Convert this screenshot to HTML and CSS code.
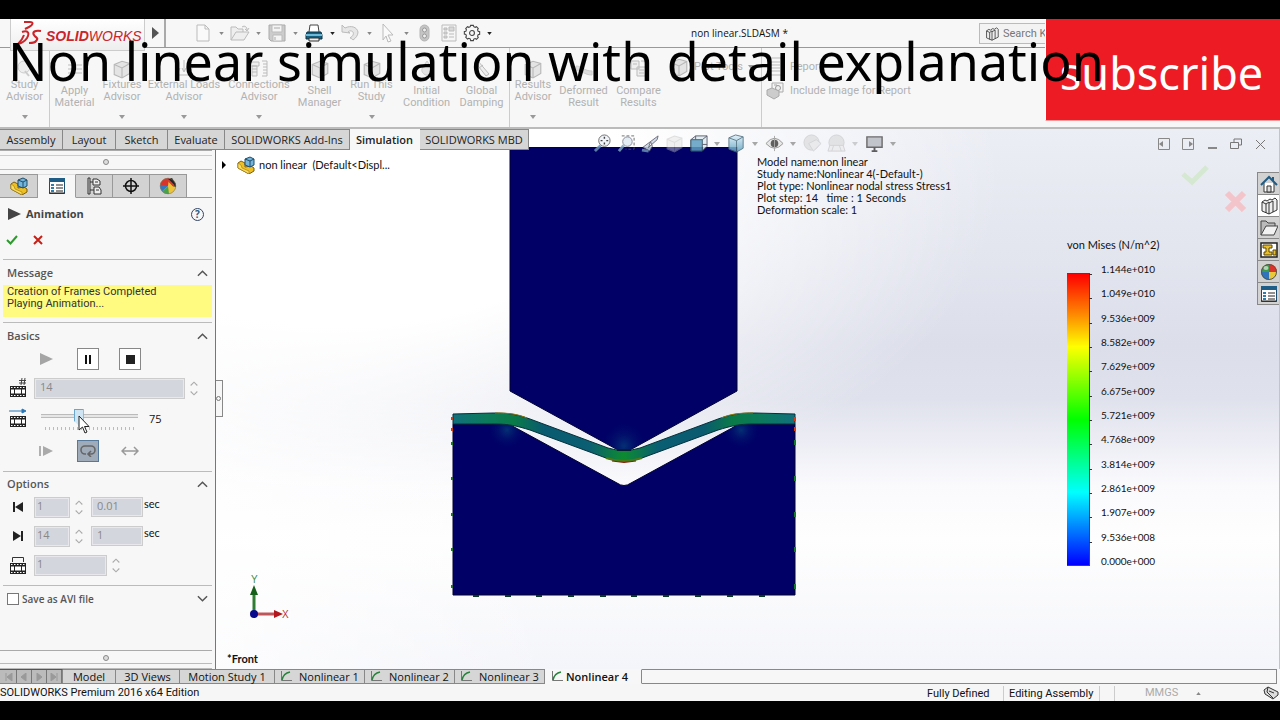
FILE: index.html
```html
<!DOCTYPE html>
<html lang="en">
<head>
<meta charset="utf-8">
<title>non linear.SLDASM</title>
<link rel="stylesheet" href="styles.css">
</head>
<body>
<svg class="defs" aria-hidden="true">
  <defs>
    <linearGradient id="steel" x1="0" y1="0" x2="0" y2="1"><stop offset="0" stop-color="#dff0f8"/><stop offset="1" stop-color="#5a9fc0"/></linearGradient>
    <symbol id="caret" viewBox="0 0 6 4"><path d="M0 0h6L3 4z" fill="currentColor"/></symbol>
    <symbol id="up" viewBox="0 0 12 8"><path d="M1 7l5-5 5 5" fill="none" stroke="currentColor" stroke-width="1.6"/></symbol>
    <symbol id="down" viewBox="0 0 12 8"><path d="M1 1l5 5 5-5" fill="none" stroke="currentColor" stroke-width="1.6"/></symbol>
    <symbol id="assembly" viewBox="0 0 18 18"><path d="M1 7l3-2 4 2v4l6-1 3 2v3l-5 3L1 12z" fill="#eebf23" stroke="#7b5a10"/><path d="M1 7l3 2 1 3 7 3v3L1 12z" fill="#f9dd5d" stroke="#9c7718" stroke-width=".6"/><path d="M8 3l5-2 4 2v6l-4 2-5-2z" fill="#74b5dc" stroke="#1f4c68"/><path d="M8 3l5 2 4-2M13 5v6" fill="none" stroke="#1f4c68"/></symbol>
    <symbol id="props" viewBox="0 0 18 18"><path d="M1.500 1.500h15v15h-15z" fill="#fff" stroke="#1b4e72"/><path d="M1 1h16v4H1z" fill="#1f5d86"/><path d="M3 7h3v2H3zM3 10h3v2H3zM3 13h3v2H3z" fill="#2e7eb2"/><path d="M8 8h7M8 11h7M8 14h7" stroke="#222"/><path d="M1 16h16" stroke="#222"/></symbol>
    <symbol id="config" viewBox="0 0 18 18"><path d="M3 1v16M5 1v16M3 1h2M3 17h2M5 5h4M5 13h4" fill="none" stroke="#333"/><path d="M8 2h4l3 2v4H8zM9 10h5l2 3v4H9z" fill="#eee" stroke="#333"/><path d="M10 5h3M11 13h3" stroke="#333"/></symbol>
    <symbol id="target" viewBox="0 0 18 18"><circle cx="9" cy="9" r="5.500" fill="none" stroke="#111" stroke-width="1.500"/><path d="M9 1v16M1 9h16" stroke="#111" stroke-width="1.500"/></symbol>
    <symbol id="ball" viewBox="0 0 18 18"><circle cx="9" cy="9" r="8" fill="#e9c93b"/><path d="M9 9L1 9a8 8 0 0 1 8-8z" fill="#3d9b4b"/><path d="M9 9L9 1a8 8 0 0 1 8 8z" fill="#d9342b"/><path d="M9 9H1a8 8 0 0 0 8 8z" fill="#2f74bd"/><circle cx="9" cy="9" r="7.500" fill="none" stroke="#555"/><ellipse cx="6" cy="5" rx="2.500" ry="2" fill="#fff" opacity=".6"/></symbol>
    <symbol id="ball2" viewBox="0 0 18 18"><circle cx="9" cy="9" r="8" fill="#eec33c"/><path d="M9 9L1 9a8 8 0 0 1 9-8z" fill="#d9342b"/><path d="M9 9L3 14.500A8 8 0 0 1 1 8z" fill="#3478c0"/><path d="M9 9l-6 5.500A8 8 0 0 0 10 17z" fill="#48a24c"/><path d="M9 2l4-1 4 6v3l-3-1z" fill="#222"/><path d="M9 3l6 6" stroke="#d43c30" stroke-width="2"/><circle cx="9" cy="9" r="7.800" fill="none" stroke="#777" stroke-width=".6"/></symbol>
    <symbol id="film" viewBox="0 0 18 18"><path d="M1 6h16v11H1z" fill="#222"/><path d="M2 9.500h3v4H2zM6 9.500h6v4H6zM13 9.500h3v4h-3z" fill="#fff"/><path d="M2 7.500h15M2 15.500h15" stroke="#fff" stroke-dasharray="1.500 1.500"/></symbol>
    <symbol id="box" viewBox="0 0 18 18"><path d="M2 5l7-3 7 2v9l-7 4-7-3z" fill="#e4e4e4" stroke="#b8b8b8"/><path d="M2 5l7 3 7-4M9 8v9" fill="none" stroke="#b8b8b8"/></symbol>
    <symbol id="plot" viewBox="0 0 12 11"><path d="M1.500 0v9.500H12" fill="none" stroke="#777"/><path d="M2 9C3 4 5 2 10 1" fill="none" stroke="#27833b" stroke-width="1.300"/></symbol>
    <symbol id="books" viewBox="0 0 18 18"><path d="M2 5l3-2 2 1 3-2 2 1 3-2 2 2v10l-8 4-7-3z" fill="#eee" stroke="#333"/><path d="M2 5l4 2v9M6 7l3-2M9 5v12M9 6l4-2M13 4v11" fill="none" stroke="#333"/></symbol>
  </defs>
</svg>

<div class="app">
  <header class="titlebar">
    <div class="brand">
      <div class="logo">
        <svg width="26" height="26" viewBox="0 0 26 26"><path d="M8 2h6c4 0 3 3-1 5l-4 2" fill="none" stroke="#c9252b" stroke-width="2"/><path d="M6 12c6-2 8 1 5 6-2 3-5 5-9 6 3-3 5-6 6-9" fill="none" stroke="#c9252b" stroke-width="2"/><path d="M25 11c-6-1-9 1-7 4 2 3 5 3 2 6-1 2-4 2-7 2" fill="none" stroke="#c9252b" stroke-width="2.200"/></svg>
        <span class="wordmark"><b>SOLID</b>WORKS</span>
      </div>
      <button class="plain" aria-label="Menu"><svg width="7" height="12" viewBox="0 0 7 12"><path d="M0 0l7 6-7 6z" fill="#555"/></svg></button>
    </div>
    <nav class="quick">
      <button class="qb dim" aria-label="New"><svg width="20" height="20" viewBox="0 0 20 20"><path d="M4 2h8l4 4v12H4zM12 2v4h4" fill="#fafafa" stroke="#bbb"/></svg><svg class="car"><use href="#caret"/></svg></button>
      <button class="qb dim" aria-label="Open"><svg width="20" height="20" viewBox="0 0 20 20"><path d="M1 17V4h5l2 2h5v3M1 17l5-8h13l-5 8zM12 4c3-2 5 0 5 3M15 6l2 2 2-3" fill="#eee" stroke="#bbb"/></svg><svg class="car"><use href="#caret"/></svg></button>
      <button class="qb dim" aria-label="Save"><svg width="20" height="20" viewBox="0 0 20 20"><path d="M2 2h16v16H4l-2-2z" fill="#ccc" stroke="#aaa"/><path d="M5 2h10v7H5zM6 12h9v6H6z" fill="#f4f4f4" stroke="#bbb"/><path d="M7 5h6M8 14v3" stroke="#aaa"/></svg><svg class="car"><use href="#caret"/></svg></button>
      <button class="qb" aria-label="Print"><svg width="20" height="20" viewBox="0 0 20 20"><path d="M5 9l1-7h8l1 7" fill="#fff" stroke="#444"/><path d="M3 9h14l1 3v4H2v-4z" fill="#17607f" stroke="#0d3447"/><path d="M2 12h16" stroke="#6fb9d7" stroke-width="2"/><path d="M5 15h10v3H5z" fill="#eee" stroke="#333"/></svg><svg class="car"><use href="#caret"/></svg></button>
      <button class="qb dim" aria-label="Undo"><svg width="20" height="20" viewBox="0 0 20 20"><path d="M1 9V2l3 3c6-3 12-1 13 4 0 3-2 6-5 8-1-1-2-2-3-2 3-2 4-4 3-6-1-1-3-2-5 0l2 1z" fill="#e6e6e6" stroke="#bbb"/></svg><svg class="car"><use href="#caret"/></svg></button>
      <button class="qb dim" aria-label="Select"><svg width="20" height="20" viewBox="0 0 20 20"><path d="M5 1l10 11h-5l3 6-3 1-2-6-3 4z" fill="#fafafa" stroke="#bbb"/></svg><svg class="car"><use href="#caret"/></svg></button>
      <button class="qb one" aria-label="Rebuild"><svg width="20" height="20" viewBox="0 0 20 20"><rect x="5" y="2" width="9" height="16" rx="4.500" fill="#c4c4c4" stroke="#b4b4b4"/><circle cx="9.500" cy="7" r="2" fill="#eee" stroke="#999"/><circle cx="9.500" cy="13" r="2" fill="#eee" stroke="#999"/></svg></button>
      <button class="qb one" aria-label="File properties"><svg width="20" height="20" viewBox="0 0 20 20"><path d="M3 2h14v16H3z" fill="#f6f6f6" stroke="#bbb"/><path d="M5 5h3v2H5zM5 9h3v2H5zM5 13h3v2H5zM10 4h5v4h-5z" fill="#d8d8d8" stroke="#bbb"/><path d="M10 11h5M10 14h5" stroke="#bbb"/></svg></button>
      <button class="qb" aria-label="Options"><svg width="18" height="18" viewBox="0 0 20 20"><path d="M8 3l.5-1.500h3L12 3l1.500.7L15 3l2 2-.8 1.500.6 1.500 1.700.5v3l-1.700.5-.6 1.500.8 1.500-2 2-1.500-.8-1.500.6-.5 1.700h-3L8 16.500l-1.500-.6L5 16.700l-2-2 .8-1.500-.6-1.500-1.700-.5v-3L3.200 8l.6-1.500L3 5l2-2 1.500.7z" fill="none" stroke="#444" stroke-width="1.200"/><circle cx="10" cy="10" r="2.700" fill="none" stroke="#444" stroke-width="1.200"/></svg><svg class="car"><use href="#caret"/></svg></button>
    </nav>
    <h1 class="doc">non linear.SLDASM *</h1>
    <label class="search"><svg width="14" height="14"><use href="#books"/></svg><input type="text" aria-label="Search" placeholder="Search Knowledge Base"></label>
  </header>

  <div class="ribbon">
    <button class="rb w50"><svg width="20" height="20" viewBox="0 0 20 20"><circle cx="9" cy="8" r="6" fill="#eee" stroke="#ccc"/><path d="M10 12l4 5" stroke="#ccc" stroke-width="2"/></svg><span>Study<br>Advisor</span><svg class="car"><use href="#caret"/></svg></button>
    <span class="sep"></span>
    <button class="rb low w50"><svg width="20" height="20" viewBox="0 0 20 20"><path d="M3 6h14M3 10h14M3 14h14" stroke="#bbb"/></svg><span>Apply<br>Material</span></button>
    <button class="rb w46"><svg width="20" height="20"><use href="#box"/></svg><span>Fixtures<br>Advisor</span><svg class="car"><use href="#caret"/></svg></button>
    <button class="rb w78"><svg width="20" height="20" viewBox="0 0 20 20"><path d="M4 3v9M10 1v11M16 3v9M2 9l2 4 2-4M8 9l2 4 2-4M14 9l2 4 2-4M2 16h16" fill="none" stroke="#bbb"/></svg><span>External Loads<br>Advisor</span><svg class="car"><use href="#caret"/></svg></button>
    <button class="rb w72"><svg width="20" height="20" viewBox="0 0 20 20"><path d="M1 3h9v4H1zM3 7h5v10H3zM3 10h5M3 13h5M13 2h5M13 17h5M18 2v15M14 5h4M14 8h4M14 11h4M14 14h4" fill="#eee" stroke="#bbb"/></svg><span>Connections<br>Advisor</span><svg class="car"><use href="#caret"/></svg></button>
    <button class="rb low w50"><svg width="20" height="20"><use href="#box"/></svg><span>Shell<br>Manager</span></button>
    <button class="rb w54"><svg width="20" height="20"><use href="#box"/></svg><span>Run This<br>Study</span><svg class="car"><use href="#caret"/></svg></button>
    <button class="rb low w54"><svg width="20" height="20" viewBox="0 0 20 20"><path d="M10 2l4 6a5 5 0 1 1-8 0z" fill="#e4e4e4" stroke="#ccc"/></svg><span>Initial<br>Condition</span></button>
    <button class="rb low w54"><svg width="20" height="20" viewBox="0 0 20 20"><path d="M3 3l3-1 11 13-3 2zM7 9l4-3" fill="#eee" stroke="#bbb"/></svg><span>Global<br>Damping</span></button>
    <span class="sep"></span>
    <button class="rb w46"><svg width="20" height="20"><use href="#box"/></svg><span>Results<br>Advisor</span><svg class="car"><use href="#caret"/></svg></button>
    <button class="rb low w54"><svg width="20" height="20" viewBox="0 0 20 20"><path d="M2 7c6 0 8 5 16 5v4C10 16 8 11 2 11z" fill="#ddd" stroke="#ccc"/></svg><span>Deformed<br>Result</span></button>
    <button class="rb low w54"><svg width="20" height="20" viewBox="0 0 20 20"><path d="M2 2h8v8H2zM8 8h9v9H8zM12 2h5v5M4 5h4M10 11h5M10 14h5" fill="#eee" stroke="#bbb"/></svg><span>Compare<br>Results</span></button>
    <div class="stack plots"><button class="row"><svg width="20" height="20"><use href="#box"/></svg>Plot Tools<svg class="car"><use href="#caret"/></svg></button></div>
    <span class="sep"></span>
    <div class="stack">
      <button class="row"><svg width="20" height="20" viewBox="0 0 20 20"><path d="M4 1h13v17H4zM6 5h9M6 8h9M6 11h9M6 14h9" fill="#f8f8f8" stroke="#bbb"/></svg>Report</button>
      <button class="row"><svg width="20" height="20" viewBox="0 0 20 20"><path d="M7 2h11v9H7zM9 4h3v2" fill="#f4f4f4" stroke="#aaa"/><circle cx="13" cy="7" r="2.500" fill="#eee" stroke="#999"/><path d="M2 9l5-2 7 3v5l-5 3-7-4z" fill="#ccc" stroke="#aaa"/></svg>Include Image for Report</button>
    </div>
  </div>

  <main class="work">
    <nav class="tabs">
      <button class="t1">Assembly</button><button class="t2">Layout</button><button class="t3">Sketch</button><button class="t4">Evaluate</button><button class="t5">SOLIDWORKS Add-Ins</button><button class="t6 on">Simulation</button><button class="t7">SOLIDWORKS MBD</button>
    </nav>

    <aside class="panel">
      <div class="grip"><i></i></div>
      <nav class="ptabs">
        <button aria-label="Feature tree"><svg width="18" height="18"><use href="#assembly"/></svg></button>
        <button class="on" aria-label="Properties"><svg width="18" height="18"><use href="#props"/></svg></button>
        <button aria-label="Configurations"><svg width="18" height="18"><use href="#config"/></svg></button>
        <button aria-label="Dimensions"><svg width="18" height="18"><use href="#target"/></svg></button>
        <button aria-label="Display"><svg width="18" height="18"><use href="#ball2"/></svg></button>
      </nav>
      <div class="head">
        <svg width="13" height="12" viewBox="0 0 13 12"><path d="M0 0l13 6-13 6z" fill="#444"/></svg>
        <h2>Animation</h2>
        <button class="help" aria-label="Help">?</button>
      </div>
      <div class="confirm">
        <button class="plain" aria-label="OK"><svg width="12" height="10" viewBox="0 0 12 10"><path d="M1 5l3.500 3.500L11 1" fill="none" stroke="#2c9a2c" stroke-width="2"/></svg></button>
        <button class="plain" aria-label="Cancel"><svg width="10" height="10" viewBox="0 0 10 10"><path d="M1 1l8 8M9 1L1 9" stroke="#c81e14" stroke-width="2"/></svg></button>
      </div>

      <section>
        <div class="sh"><h3>Message</h3><button class="plain" aria-label="Collapse"><svg class="chev"><use href="#up"/></svg></button></div>
        <p class="note">Creation of Frames Completed<br>Playing Animation...</p>
      </section>

      <section>
        <div class="sh"><h3>Basics</h3><button class="plain" aria-label="Collapse"><svg class="chev"><use href="#up"/></svg></button></div>
        <div class="play">
          <button class="pb flat" aria-label="Play"><svg width="13" height="12" viewBox="0 0 13 12"><path d="M0 0l13 6-13 6z" fill="#a5a5a5"/></svg></button>
          <button class="pb" aria-label="Pause"><svg width="8" height="9" viewBox="0 0 8 9"><path d="M1 0h2v9H1zM5 0h2v9H5z" fill="#111"/></svg></button>
          <button class="pb" aria-label="Stop"><svg width="9" height="9" viewBox="0 0 9 9"><path d="M0 0h9v9H0z" fill="#222"/></svg></button>
        </div>
        <div class="field frames">
          <svg width="18" height="20" viewBox="0 0 18 20"><use href="#film" y="2" width="18" height="18"/><path d="M13 0l-1 7M16 0l-1 7M10 2.500h7M10 5h7" stroke="#333" stroke-width=".9"/></svg>
          <input class="grow" type="text" value="14" aria-label="Number of frames" disabled>
          <span class="spin"><svg><use href="#up"/></svg><svg><use href="#down"/></svg></span>
        </div>
        <div class="field speed">
          <svg width="18" height="20" viewBox="0 0 18 20"><use href="#film" y="2" width="18" height="18"/><path d="M0 3h15M13 1l4 2-4 2z" stroke="#2676b6" fill="#2676b6"/></svg>
          <span class="slide"><input type="range" id="speed" min="0" max="200" value="75" aria-label="Speed"><i class="ticks"></i></span>
          <output for="speed">75</output>
        </div>
        <div class="play modes">
          <button class="pb flat" aria-label="Play once"><svg width="14" height="10" viewBox="0 0 14 10"><path d="M1 0v10" stroke="#999" stroke-width="1.500"/><path d="M4 0l10 5-10 5z" fill="#aaa"/></svg></button>
          <button class="pb sel" aria-label="Loop"><svg width="16" height="12" viewBox="0 0 16 12"><path d="M6 9H5a4 4 0 0 1 0-8h6a4 4 0 0 1 0 8H9M11 6L8 9l3 3" fill="none" stroke="#666" stroke-width="1.600"/></svg></button>
          <button class="pb flat" aria-label="Reciprocate"><svg width="18" height="10" viewBox="0 0 18 10"><path d="M1 5h16M5 1L1 5l4 4M13 1l4 4-4 4" fill="none" stroke="#999" stroke-width="1.500"/></svg></button>
        </div>
      </section>

      <section class="opts">
        <div class="sh"><h3>Options</h3><button class="plain" aria-label="Collapse"><svg class="chev"><use href="#up"/></svg></button></div>
        <div class="field">
          <svg width="18" height="18" viewBox="0 0 18 18"><path d="M5 4v10" stroke="#222" stroke-width="2"/><path d="M14 4v10L6 9z" fill="#222"/></svg>
          <input class="n" type="text" value="1" aria-label="Start frame" disabled>
          <span class="spin"><svg><use href="#up"/></svg><svg><use href="#down"/></svg></span>
          <input class="s" type="text" value="0.01" id="t0" disabled><label for="t0">sec</label>
        </div>
        <div class="field">
          <svg width="18" height="18" viewBox="0 0 18 18"><path d="M13 4v10" stroke="#222" stroke-width="2"/><path d="M4 4v10l8-5z" fill="#222"/></svg>
          <input class="n" type="text" value="14" aria-label="End frame" disabled>
          <span class="spin"><svg><use href="#up"/></svg><svg><use href="#down"/></svg></span>
          <input class="s" type="text" value="1" id="t1" disabled><label for="t1">sec</label>
        </div>
        <div class="field">
          <svg width="18" height="18" viewBox="0 0 18 18"><use href="#film" y="1" width="18" height="18"/><path d="M3.500 6V1.500h11V6" fill="none" stroke="#333"/></svg>
          <input class="m" type="text" value="1" aria-label="Increment" disabled>
          <span class="spin"><svg><use href="#up"/></svg><svg><use href="#down"/></svg></span>
        </div>
      </section>

      <section>
        <div class="sh save"><label><input type="checkbox">Save as AVI file</label><button class="plain" aria-label="Expand"><svg class="chev"><use href="#down"/></svg></button></div>
      </section>
      <div class="grip foot"><i></i></div>
    </aside>

    <div class="view">
      <svg class="model" width="352" height="452" viewBox="448 147 352 452">
        <defs>
          <linearGradient id="sheet" x1="452" x2="795" y1="0" y2="0" gradientUnits="userSpaceOnUse">
            <stop offset="0" stop-color="#12707c"/><stop offset=".1" stop-color="#0c7a5c"/><stop offset=".18" stop-color="#0a7a48"/><stop offset=".27" stop-color="#0a5a70"/><stop offset=".4" stop-color="#0b5f72"/><stop offset=".5" stop-color="#0d8a30"/><stop offset=".6" stop-color="#0b5f72"/><stop offset=".73" stop-color="#0a5a70"/><stop offset=".82" stop-color="#0a7a48"/><stop offset=".9" stop-color="#0c7a5c"/><stop offset="1" stop-color="#12707c"/>
          </linearGradient>
          <radialGradient id="glow"><stop offset="0" stop-color="#05457a" stop-opacity=".7"/><stop offset="1" stop-color="#000066" stop-opacity="0"/></radialGradient>
          <clipPath id="solid"><path d="M510 147h227v244L630 450h-12L510 391zM453 424h50c4 0 8 1 13 4L617 483q7 5 14 0l101-55c4-3 8-4 13-4h50v171H453z"/></clipPath>
        </defs>
        <path d="M510 147h227v244L630 450h-12L510 391z" fill="#000066" stroke="#000030"/>
        <path d="M453 424h50c4 0 8 1 13 4L617 483q7 5 14 0l101-55c4-3 8-4 13-4h50v171H453z" fill="#000066" stroke="#000030"/>
        <g clip-path="url(#solid)" fill="url(#glow)"><ellipse cx="624" cy="446" rx="24" ry="26"/><circle cx="507" cy="430" r="20"/><circle cx="741" cy="430" r="20"/></g>
        <path d="M453 414l40-1c15 0 23 1 37 6l78 29q16 5 32 0l78-29c14-5 22-6 37-6l40 1v10h-42c-14 0-22 2-35 6l-76 28q-18 7-36 0l-76-28c-13-4-21-6-35-6h-42z" fill="url(#sheet)" stroke="#04303c"/>
        <path d="M495 413c15 0 22 1 32 5M753 413c-15 0-22 1-32 5" fill="none" stroke="#8a7a10"/>
        <path d="M606 458q18 6 36 0" fill="none" stroke="#4a7a14" stroke-width="2"/>
        <path d="M612 461q12 3 24 0" fill="none" stroke="#7c2008"/>
        <path d="M617 450h14" stroke="#041c30" stroke-width="2"/>
        <path d="M452 417v3M452 428v3M795 417v4M795 427v4" stroke="#d43c16" stroke-width="2"/>
        <path d="M452 442v3M452 477v3M452 513v3M452 548v3M452 585v3M795 440v5M795 476v5M795 512v5M795 547v5M795 584v5" stroke="#157a30" stroke-width="2"/>
        <path d="M473 596h6M505 596h6M536 596h6M568 596h6M600 596h6M631 596h6M663 596h6M695 596h6M727 596h6M759 596h6" stroke="#0b3a22" stroke-width="2"/>
      </svg>

      <div class="tree"><svg width="4" height="8" viewBox="0 0 4 8"><path d="M0 0l4 4-4 4z"/></svg><svg width="18" height="18"><use href="#assembly"/></svg><span>non linear&nbsp; (Default&lt;Displ...</span></div>

      <div class="hud">
        <button class="one" aria-label="Zoom to fit"><svg viewBox="0 0 20 20"><circle cx="12" cy="7" r="6" fill="#eef2f6" stroke="#555"/><path d="M12 3v2M12 9v2M8 7h2M14 7h2" stroke="#222" stroke-width="1.500"/><path d="M8 12l-6 6" stroke="#6a90b4" stroke-width="3"/></svg></button>
        <button class="one" aria-label="Zoom area"><svg viewBox="0 0 20 20"><path d="M5 2h13v14H9" fill="none" stroke="#555" stroke-dasharray="3 2"/><circle cx="11" cy="8" r="5" fill="#dfe9f0" stroke="#778"/><path d="M7 12l-5 6" stroke="#7ba0c0" stroke-width="3"/></svg></button>
        <button class="one" aria-label="Previous view"><svg viewBox="0 0 20 20"><path d="M18 2l-8 6-2 6 9-8zM2 14l8-6 2 5-3 5z" fill="#c9d8e2" stroke="#556"/><path d="M1 17l7 1" stroke="#6a90b4" stroke-width="3"/></svg></button>
        <button class="one faded" aria-label="Section view"><svg viewBox="0 0 20 20"><use href="#box"/></svg></button>
        <button aria-label="View orientation"><svg viewBox="0 0 20 20"><path d="M2 6l5-4h12v11l-5 5H2z" fill="#dde9ef" stroke="#445"/><path d="M2 6h12v12H2z" fill="#5d9fc2" stroke="#245"/><path d="M14 6l5-4M7 2v4M14 11h5" stroke="#445"/></svg><svg class="car"><use href="#caret"/></svg></button>
        <button aria-label="Display style"><svg viewBox="0 0 20 20"><path d="M2 4l7-3 8 2v12l-7 4-8-3z" fill="url(#steel)" stroke="#467"/><path d="M2 4l8 3 7-4M10 7v12" fill="none" stroke="#467"/></svg><svg class="car"><use href="#caret"/></svg></button>
        <button aria-label="Hide or show"><svg viewBox="0 0 20 20"><path d="M1 10q9-11 18 0-9 10-18 0z" fill="#e5e5e5" stroke="#888"/><circle cx="10" cy="10" r="4" fill="#444"/><path d="M10 2v16" stroke="#999"/></svg><svg class="car"><use href="#caret"/></svg></button>
        <button class="one faded" aria-label="Appearance"><svg viewBox="0 0 20 20"><circle cx="9" cy="9" r="8" fill="#ccc" stroke="#aaa"/><path d="M6 10l8-4 5 4-8 8z" fill="#ddd" stroke="#aaa"/></svg></button>
        <button class="faded" aria-label="Scene"><svg viewBox="0 0 20 20"><circle cx="10" cy="9" r="8" fill="#ccc" stroke="#aaa"/><path d="M1 18l2-6h14l2 6zM7 12l-2 6M13 12l2 6" fill="#e5e5e5" stroke="#aaa"/></svg><svg class="car"><use href="#caret"/></svg></button>
        <button aria-label="View settings"><svg viewBox="0 0 20 20"><path d="M2 3h16v11H2z" fill="#b9bdc4" stroke="#555" stroke-width="1.500"/><path d="M10 14v3M7 18h6" stroke="#444" stroke-width="2"/></svg><svg class="car"><use href="#caret"/></svg></button>
      </div>

      <p class="info">Model name:non linear<br>Study name:Nonlinear 4(-Default-)<br>Plot type: Nonlinear nodal stress Stress1<br>Plot step: 14 &nbsp; time : 1 Seconds<br>Deformation scale: 1</p>

      <div class="winctl">
        <button aria-label="Previous pane"><svg viewBox="0 0 12 12"><path d="M.5.5h11v11H.5z" fill="none" stroke="#888"/><path d="M5 3v6L1 6z" fill="#888"/></svg></button>
        <button aria-label="Next pane"><svg viewBox="0 0 12 12"><path d="M.5.5h11v11H.5z" fill="none" stroke="#888"/><path d="M7 3v6l4-3z" fill="#888"/></svg></button>
        <button aria-label="Minimize"><svg viewBox="0 0 12 12"><path d="M2 9h9v2H2z" fill="#888"/></svg></button>
        <button aria-label="Restore"><svg viewBox="0 0 12 12"><path d="M.5 4.500h8v6h-8zM4 4V1h7.500v6H9" fill="none" stroke="#777"/></svg></button>
        <button aria-label="Close"><svg viewBox="0 0 12 12"><path d="M2 2l9 9M11 2l-9 9" stroke="#777"/></svg></button>
      </div>

      <svg class="accept" width="68" height="48" viewBox="0 0 68 48"><path d="M3 10l9 8L27 3" fill="none" stroke="#d5e8d2" stroke-width="5"/><path d="M47 29l17 17M64 29L47 46" stroke="#f3c4c9" stroke-width="6"/></svg>

      <div class="legend">
        <h4>von Mises (N/m^2)</h4>
        <div class="scale"><i class="bar"></i>
          <ol><li>1.144e+010</li><li>1.049e+010</li><li>9.536e+009</li><li>8.582e+009</li><li>7.629e+009</li><li>6.675e+009</li><li>5.721e+009</li><li>4.768e+009</li><li>3.814e+009</li><li>2.861e+009</li><li>1.907e+009</li><li>9.536e+008</li><li>0.000e+000</li></ol>
        </div>
      </div>

      <svg class="triad" width="44" height="48" viewBox="0 0 44 48"><path d="M8 40V20" stroke="#2f7d32" stroke-width="3"/><path d="M8 11l4 10H4z" fill="#17601c"/><path d="M8 40h20" stroke="#c0565a" stroke-width="3"/><path d="M37 40l-9-4v8z" fill="#b3161c"/><circle cx="8" cy="40" r="4" fill="#0a0a8c"/><text x="5" y="9" fill="#3f8f46">Y</text><text x="36" y="44" fill="#b9353a">X</text></svg>
      <strong class="front">*Front</strong>
      <button class="handle" aria-label="Hide panel"><i></i></button>

      <nav class="taskpane">
        <button aria-label="Home"><svg viewBox="0 0 18 18"><path d="M4 8v9h10V8" fill="#fff" stroke="#333"/><path d="M1 10l8-8 8 8M13 2v4" fill="none" stroke="#1f5d86" stroke-width="2"/><path d="M7 11h4v6H7z" fill="#ddd" stroke="#333"/></svg></button>
        <button class="on" aria-label="Design library"><svg viewBox="0 0 18 18"><use href="#books"/></svg></button>
        <button aria-label="File explorer"><svg viewBox="0 0 18 18"><path d="M1 16V2h5l2 2h7v3" fill="#bbb" stroke="#444"/><path d="M1 16L6 7h12l-4 9z" fill="#f2f2f2" stroke="#444"/></svg></button>
        <button aria-label="View palette"><svg viewBox="0 0 18 18"><path d="M1 2h16v14H1z" fill="#fff" stroke="#222" stroke-width="1.500"/><path d="M3 4h9v3H9v4h3v3H4v-3h2V7H3zM13 9h3v5h-3z" fill="#e8bf2a" stroke="#5a4508"/></svg></button>
        <button aria-label="Appearances"><svg viewBox="0 0 18 18"><use href="#ball"/></svg></button>
        <button aria-label="Custom properties"><svg viewBox="0 0 18 18"><use href="#props"/></svg></button>
      </nav>
    </div>
  </main>

  <nav class="sheets">
    <span class="seek"><button aria-label="First"><svg viewBox="0 0 8 8"><path d="M1 0v8M7 0v8L2 4z"/></svg></button><button aria-label="Previous"><svg viewBox="0 0 8 8"><path d="M6 0v8L1 4z"/></svg></button><button aria-label="Next"><svg viewBox="0 0 8 8"><path d="M2 0v8l5-4z"/></svg></button><button aria-label="Last"><svg viewBox="0 0 8 8"><path d="M7 0v8M1 0v8l5-4z"/></svg></button></span>
    <button class="s1">Model</button><button class="s2">3D Views</button><button class="s3">Motion Study 1</button><button class="s4"><svg><use href="#plot"/></svg>Nonlinear 1</button><button class="s4"><svg><use href="#plot"/></svg>Nonlinear 2</button><button class="s4"><svg><use href="#plot"/></svg>Nonlinear 3</button><button class="s5 on"><svg><use href="#plot"/></svg>Nonlinear 4</button><span class="rest"></span>
  </nav>

  <footer class="status">
    <span class="ed">SOLIDWORKS Premium 2016 x64 Edition</span>
    <span class="cell c1">Fully Defined</span><span class="cell c2">Editing Assembly</span><span class="cell c3"></span>
    <button class="plain units">MMGS<svg width="5" height="3" viewBox="0 0 6 4"><path d="M0 4h6L3 0z" fill="#888"/></svg></button>
    <button class="plain tag" aria-label="Tags"><svg width="16" height="14" viewBox="0 0 16 14"><path d="M1 4l4-3 10 5v3l-5 4L2 8z" fill="#ddd" stroke="#333"/><path d="M5 1l-1 5 6 6M6 5l5 2" fill="none" stroke="#333"/></svg></button>
  </footer>

  <div class="banner">subscribe</div>
  <div class="headline">Non linear simulation with detail explanation</div>
  <svg class="cursor" width="12" height="19" viewBox="0 0 12 19"><path d="M1 1v14l3.500-3L7 18l2-1-2.500-5.500H11z" fill="#fff" stroke="#222"/></svg>
</div>
</body>
</html>
```
FILE: styles.css
```css
* { box-sizing: border-box; }
body { margin: 0; background: #000; font: 11px/12px Roboto, "Liberation Sans", sans-serif; color: #111; }
button { font: inherit; color: inherit; border: 0; padding: 0; margin: 0; background: none; }
h1, h2, h3, h4, p, ol { margin: 0; padding: 0; font: inherit; }
svg { display: block; flex: none; }
.defs { position: absolute; width: 0; height: 0; }
.plain { display: flex; align-items: center; }
.car { width: 6px; height: 4px; color: #999; }

.app { position: relative; display: flex; flex-direction: column; min-height: 100vh; padding: 19px 0; }

/* title bar */
.titlebar { display: flex; height: 29px; background: #f7f7f7; border-bottom: 1px solid #999; }
.brand { display: flex; width: 166px; align-items: center; gap: 7px; padding-left: 10px; border-right: 2px solid #aaa; }
.logo { display: flex; align-items: center; align-self: flex-start; width: 135px; height: 32px; padding: 0 0 4px 5px; gap: 4px; background: linear-gradient(#fff, #eee); border: 1px solid #ccc; border-top: 0; z-index: 1; }
.wordmark { font: italic 14px/16px "Liberation Sans", sans-serif; color: #c9252b; padding-top: 6px; }
.quick { display: flex; align-items: center; padding-left: 27px; }
.qb { display: flex; align-items: center; gap: 6px; width: 37px; }
.qb.one { width: 24px; }
.qb .car { width: 5px; height: 3px; color: #222; }
.qb.dim .car { color: #888; }
.doc { flex: 1; text-align: center; align-self: center; font-family: "Open Sans", sans-serif; font-size: 10px; }
.search { display: flex; align-items: center; gap: 4px; flex: none; width: 301px; height: 21px; margin-top: 4px; padding-left: 5px; background: #f3f3f3; border: 1px solid #bbb; }
.search input { flex: 1; min-width: 0; border: 0; padding: 0; background: none; font: 11px/12px Roboto, sans-serif; }
.search input::placeholder { color: #777; opacity: 1; }

/* ribbon */
.ribbon { display: flex; height: 81px; background: #f7f7f7; border-bottom: 2px solid #bbb; color: #b2b2b2; line-height: 12px; }
.rb { display: flex; flex-direction: column; align-items: center; flex: none; padding-top: 11px; white-space: nowrap; text-align: center; }
.rb span { display: block; }
.rb svg:first-child { height: 20px; }
.rb.low span { margin-top: 6px; }
.rb .car { margin-top: 12px; }
.w46 { width: 46px; } .w50 { width: 49px; } .w54 { width: 55px; } .w72 { width: 72px; } .w78 { width: 78px; }
.sep { flex: none; width: 1px; background: #ccc; }
.stack { display: flex; flex-direction: column; gap: 4px; padding: 9px 0 0 3px; }
.plots { width: 95px; }
.row { display: flex; align-items: center; gap: 5px; height: 20px; white-space: nowrap; }

/* work area */
.work { flex: 1; display: grid; grid-template: 21px 1fr / 216px 1fr; }
.tabs { grid-area: 1 / 1 / 2 / 3; display: flex; z-index: 2; justify-self: start; font: 11px/18px "Open Sans", sans-serif; }
.tabs button { background: #d6d6d6; border: 1px solid #888; border-width: 1px 1px 1px 0; color: #222; white-space: nowrap; }
.tabs .on { background: #f7f7f7; border-color: transparent; font-weight: 600; }
.t1 { width: 63px; } .t2 { width: 53px; } .t3 { width: 52px; } .t4 { width: 57px; } .t5 { width: 125px; } .t6 { width: 70px; } .t7 { width: 109px; }
.view { grid-area: 1 / 2 / 3 / 3; position: relative; overflow: hidden; background: radial-gradient(ellipse 62% 68% at 12% 8%, #fff 0, #fff 42%, rgba(255,255,255,0) 100%), linear-gradient(90deg, rgba(255,255,255,.75) 0, rgba(255,255,255,0) 32%), linear-gradient(#eceef5 0, #dcdeea 40%, #dfe1ec 50%, #fafafd 66%, #fefefe 76%, #f4f5fa 100%); border-right: 1px solid #e8c65a; }
.panel { grid-area: 2 / 1 / 3 / 2; background: #f7f7f7; border-right: 1px solid #777; padding: 0 3px 0 0; display: flex; flex-direction: column; z-index: 1; font-family: "Open Sans", sans-serif; }

.grip { display: flex; align-items: center; justify-content: center; height: 20px; border-top: 1px solid #aaa; border-bottom: 1px solid #bbb; box-shadow: inset 0 4px 0 #f7f7f7, inset 0 5px 0 #ccc; padding-top: 4px; }
.grip i { width: 6px; height: 6px; border: 1px solid #888; border-radius: 50%; background: #ddd; }
.grip.foot { margin-top: auto; height: 19px; padding: 0 0 3px; box-shadow: inset 0 -4px 0 #f7f7f7, inset 0 -5px 0 #bbb; }
.ptabs { display: flex; height: 24px; margin-top: 4px; border-bottom: 1px solid #999; }
.ptabs button { display: flex; align-items: center; justify-content: center; width: 38px; height: 24px; background: #d2d2d2; border: 1px solid #999; border-left: 0; }
.ptabs .on { background: #f7f7f7; border-bottom-color: #f7f7f7; border-top-color: #ddd; }
.ptabs button + button + button { width: 37px; }
.head { display: flex; align-items: center; gap: 5px; padding: 0 8px; height: 32px; }
.head h2 { flex: 1; font-weight: 700; font-size: 11px; color: #444; }
.help { width: 13px; height: 13px; border: 1px solid #346; border-radius: 50%; font: bold 10px/10px "Open Sans", sans-serif; color: #1f5d86; }
.confirm { display: flex; gap: 15px; padding: 5px 0 0 6px; height: 29px; align-items: flex-start; }

section { margin-left: 3px; border-top: 1px solid #bbb; padding-bottom: 5px; }
.sh { display: flex; align-items: center; justify-content: space-between; height: 25px; padding: 0 4px; color: #555; }
.sh h3 { font-weight: 600; }
.chev { width: 11px; height: 8px; }
.note { height: 32px; padding: 1px 4px; background: #fffb80; font: 11px/12px Roboto, sans-serif; color: #333; }
.play { display: flex; gap: 20px; padding-left: 32px; margin-bottom: 7px; }
.pb { display: flex; align-items: center; justify-content: center; width: 22px; height: 22px; border: 1px solid #888; background: #fff; }
.pb.flat { border: 0; background: none; }
.pb.sel { background: #9fabb8; border: 1px solid #56789a; }
.modes { margin: 4px 0; }
.field { display: flex; align-items: center; padding-left: 6px; margin-bottom: 7px; height: 22px; }
.field > svg { margin-right: 7px; }
.field input[type=text] { height: 21px; border: 2px solid #e8e8ec; outline: 1px solid #ccc; outline-offset: -1px; background: #d4d6dd; padding: 0 4px 4px; font: 11px/14px "Open Sans", sans-serif; color: #888; min-width: 0; }
.grow { width: 151px; } .n { width: 36px; }
.field input.n, .field input.m { padding: 0 1px 3px; }
.m { width: 73px; }
.field input.s { width: 52px; height: 20px; padding-bottom: 3px; margin-left: 6px; }
.field label { align-self: flex-start; font: 11px/12px Lato, sans-serif; padding: 2px 0 0 1px; color: #111; }
.spin { display: flex; flex-direction: column; gap: 3px; margin-left: 3px; padding: 0 2px; color: #aaa; }
.spin svg { width: 8px; height: 7px; }
.frames { margin-bottom: 9px; }
.speed { height: 28px; align-items: flex-start; margin: 0; }
.slide { display: flex; flex-direction: column; width: 97px; margin-left: 7px; }
.slide input { appearance: none; width: 100%; height: 18px; margin: 0; background: linear-gradient(#bbb, #bbb) 0 6px / 100% 1px no-repeat, linear-gradient(#bbb, #bbb) 0 9px / 100% 1px no-repeat, linear-gradient(#e6e6e6, #e6e6e6) 0 7px / 100% 2px no-repeat; }
.slide input::-webkit-slider-thumb { appearance: none; width: 10px; height: 17px; border: 1px solid #6aa5cc; background: #cfe5f4; clip-path: polygon(0 0, 100% 0, 100% 70%, 50% 100%, 0 70%); }
.ticks { height: 3px; margin: 1px 4px 0; background: repeating-linear-gradient(90deg, #bbb 0 1px, transparent 1px 4px); }
.speed output { padding: 5px 0 0 11px; }
.opts { padding-bottom: 2px; }
.opts .sh { height: 24px; }
.save label { display: flex; align-items: center; gap: 3px; font: 600 10px/12px "Open Sans", sans-serif; }
.save input { appearance: none; width: 12px; height: 12px; margin: 0; border: 1px solid #777; background: #fff; }

/* graphics canvas */
.view .model { position: absolute; left: 232px; top: 18px; }
.tree { position: absolute; left: 6px; top: 27px; display: flex; align-items: center; font: 11px/14px Lato, sans-serif; white-space: nowrap; }
.tree svg + svg { margin: 0 4px 0 11px; }
.hud { position: absolute; left: 377px; top: 5px; display: flex; opacity: .85; }
.hud button { display: flex; align-items: center; width: 38px; gap: 6px; }
.hud .one { width: 24px; }
.hud svg:first-child { width: 19px; height: 19px; }
.hud .faded { opacity: .5; }
.info { position: absolute; left: 541px; top: 27px; font: 11px/12px Lato, sans-serif; white-space: nowrap; }
.winctl { position: absolute; right: 13px; top: 9px; display: flex; gap: 12px; }
.winctl svg { width: 12px; height: 12px; }
.accept { position: absolute; right: 31px; top: 35px; }
.legend { position: absolute; right: 114px; top: 110px; width: 98px; font: 10px/12px Lato, sans-serif; }
.legend h4 { font-size: 11px; white-space: nowrap; }
.scale { display: flex; padding-top: 12px; }
.bar { width: 23px; height: 293px; margin-top: 10px; border: 1px solid #444; border-width: 1px 1px 1px 0; background: linear-gradient(red, #ff8000 13%, yellow 25%, #0f0 50%, cyan 75%, #00f); position: relative; }
.bar::after { content: ""; position: absolute; left: 100%; top: 0; width: 3px; height: 292px; background: repeating-linear-gradient(#333 0 1px, transparent 1px calc(100% / 12)); }
.legend ol { list-style: none; display: flex; flex-direction: column; justify-content: space-between; height: 304px; margin: 0 0 0 11px; }
.triad { position: absolute; left: 30px; bottom: 47px; font: 10px/10px "Liberation Sans", sans-serif; }
.front { position: absolute; left: 11px; bottom: 4px; font: bold 11px/12px Lato, sans-serif; }
.handle { position: absolute; left: -1px; top: 251px; width: 8px; height: 37px; border: 1px solid #888; border-left: 0; background: #f7f7f7; display: flex; align-items: center; justify-content: center; }
.handle i { width: 5px; height: 5px; border: 1px solid #777; border-radius: 50%; }
.taskpane { position: absolute; right: -1px; top: 43px; display: flex; flex-direction: column; border: 1px solid #888; border-width: 1px 0 0 1px; }
.taskpane button { width: 22px; height: 22px; padding: 1px; display: flex; align-items: center; justify-content: center; background: #d2d2d2; border-bottom: 1px solid #888; }
.taskpane .on { background: #fff; }
.taskpane svg { width: 18px; height: 18px; }

/* sheet tabs and status bar */
.sheets { display: flex; height: 15px; background: #f7f7f7; font: 11px/13px "Open Sans", sans-serif; padding-right: 3px; }
.sheets > button { display: flex; align-items: center; justify-content: center; gap: 7px; flex: none; white-space: nowrap; background: #d6d6d6; border: 1px solid #888; border-left: 0; }
.sheets > button.s4 { justify-content: flex-start; padding-left: 5px; }
.sheets > button svg { width: 12px; height: 11px; }
.sheets > button.on { background: #f7f7f7; border-top-color: #f7f7f7; border-bottom-color: #f7f7f7; font-weight: 600; gap: 3px; justify-content: flex-start; padding-left: 6px; }
.s1 { width: 53px; } .s2 { width: 64px; } .s3 { width: 95px; } .s4 { width: 90px; } .s5 { width: 97px; }
.rest { flex: 1; border: 1px solid #888; border-left: 0; }
.seek { display: flex; width: 63px; padding-left: 2px; background: #bbb; border-top: 1px solid #555; border-right: 1px solid #888; border-bottom: 1px solid #888; }
.seek button { flex: 1; display: flex; align-items: center; justify-content: center; border-right: 1px solid #777; }
.seek svg { width: 8px; height: 8px; fill: #999; stroke: #999; }
.status { display: flex; align-items: center; height: 17px; background: #f6f6f6; white-space: nowrap; padding-top: 1px; }
.ed { flex: 1; }
.cell { height: 15px; line-height: 15px; border-right: 1px solid #ccc; padding-left: 5px; }
.c1 { width: 82px; } .c2 { width: 96px; } .c3 { width: 15px; }
.units { width: 130px; padding-left: 30px; gap: 18px; color: #aaa; }
.tag { width: 35px; padding-left: 18px; }

/* video overlays */
.banner { position: absolute; right: 0; top: 19px; width: 235px; height: 102px; padding: 29px 3px 0 0; background: #ed1c24; border-left: 1px solid #fff; border-bottom: 1px solid #f99; color: #fff; font: 45px/50px "Noto Sans", sans-serif; text-align: center; z-index: 3; }
.headline { position: absolute; left: 8px; top: 31px; font: 52px/60px "Noto Sans", sans-serif; color: #000; white-space: nowrap; z-index: 4; }
.cursor { position: absolute; left: 78px; top: 415px; z-index: 4; }
```
